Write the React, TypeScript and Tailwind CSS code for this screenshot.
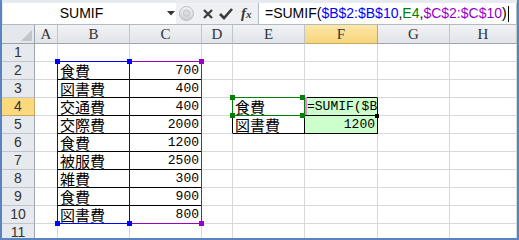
const COLS = ['A', 'B', 'C', 'D', 'E', 'F', 'G', 'H'];
const ROWS = [1, 2, 3, 4, 5, 6, 7, 8, 9, 10, 11];

type Kind = 'ja' | 'num' | 'formula';

const cells: Record<string, { text: string; kind: Kind }> = {
  B2: { text: '食費', kind: 'ja' },
  B3: { text: '図書費', kind: 'ja' },
  B4: { text: '交通費', kind: 'ja' },
  B5: { text: '交際費', kind: 'ja' },
  B6: { text: '食費', kind: 'ja' },
  B7: { text: '被服費', kind: 'ja' },
  B8: { text: '雑費', kind: 'ja' },
  B9: { text: '食費', kind: 'ja' },
  B10: { text: '図書費', kind: 'ja' },
  C2: { text: '700', kind: 'num' },
  C3: { text: '400', kind: 'num' },
  C4: { text: '400', kind: 'num' },
  C5: { text: '2000', kind: 'num' },
  C6: { text: '1200', kind: 'num' },
  C7: { text: '2500', kind: 'num' },
  C8: { text: '300', kind: 'num' },
  C9: { text: '900', kind: 'num' },
  C10: { text: '800', kind: 'num' },
  E4: { text: '食費', kind: 'ja' },
  E5: { text: '図書費', kind: 'ja' },
  F4: { text: '=SUMIF($B$2:$B$10,E4,$C$2:$C$10)', kind: 'formula' },
  F5: { text: '1200', kind: 'num' },
};

// cells that carry thin black borders
function inTable(c: number, r: number) {
  if ((c === 1 || c === 2) && r >= 2 && r <= 10) return true;
  if ((c === 4 || c === 5) && r >= 4 && r <= 5) return true;
  return false;
}

function Cell({ c, r }: { c: number; r: number }) {
  const key = COLS[c] + r;
  const data = cells[key];
  const rightBlack = inTable(c, r) || inTable(c + 1, r);
  const bottomBlack = inTable(c, r) || inTable(c, r + 1);
  const green = c === 5 && (r === 4 || r === 5);
  return (
    <div
      className={`h-[18px] whitespace-nowrap border-r border-b ${
        rightBlack ? 'border-r-black' : 'border-r-[#d5d8dc]'
      } ${bottomBlack ? 'border-b-black' : 'border-b-[#d5d8dc]'} ${green ? 'bg-[#ccffcc]' : 'bg-white'} ${
        data?.kind === 'formula' ? 'overflow-hidden' : ''
      }`}
    >
      {data?.kind === 'ja' && (
        <div className="pl-[2px] text-[15px] leading-[17px] text-black font-['Noto_Sans_CJK_JP',sans-serif]">
          {data.text}
        </div>
      )}
      {data?.kind === 'num' && (
        <div className="pr-[2px] text-right text-[13px] leading-[17px] text-black font-['Liberation_Mono',monospace]">
          {data.text}
        </div>
      )}
      {data?.kind === 'formula' && (
        <div className="pl-[2px] text-[13px] leading-[17px] text-black font-['Liberation_Mono',monospace]">
          {data.text}
        </div>
      )}
    </div>
  );
}

function Handle({ x, y, color }: { x: number; y: number; color: string }) {
  return <div className={`absolute w-[5px] h-[5px] ${color}`} style={{ left: x - 2, top: y - 2 }} />;
}

function FormulaBar() {
  return (
    <div className="h-[25px] pt-[3px] flex bg-[#e7eaef] border-b border-[#b4bac3]">
      <div className="ml-[1px] w-[173px] h-[21px] bg-white flex items-center">
        <div className="w-[157px] text-center text-[14px] text-black font-['Liberation_Sans',Arial,sans-serif]">SUMIF</div>
        <svg width="8" height="5" viewBox="0 0 8 5" className="ml-[7px]">
          <path d="M0 0 L8 0 L4 4.5 Z" fill="#333" />
        </svg>
      </div>
      <div className="w-[82px] h-[21px] flex items-center bg-[#eef0f4]">
        <svg width="15" height="15" viewBox="0 0 15 15" className="ml-[3px]">
          <defs>
            <linearGradient id="g1" x1="0" y1="0" x2="0" y2="1">
              <stop offset="0" stopColor="#f4f5f7" />
              <stop offset="1" stopColor="#c9cdd3" />
            </linearGradient>
          </defs>
          <circle cx="7.5" cy="7.5" r="7" fill="url(#g1)" stroke="#b9bdc4" />
          <circle cx="7.5" cy="7" r="3.2" fill="#d6d9de" stroke="#c3c7cd" />
        </svg>
        <svg width="10" height="10" viewBox="0 0 10 10" className="ml-[9px]">
          <path d="M1 1 L9 9 M9 1 L1 9" stroke="#3a3a3a" strokeWidth="2.2" />
        </svg>
        <svg width="14" height="12" viewBox="0 0 14 12" className="ml-[6px]">
          <path d="M1 6 L5 10 L13 1" stroke="#3a3a3a" strokeWidth="2.6" fill="none" />
        </svg>
        <div className="ml-[8px] italic font-bold text-[15px] leading-none text-[#3a3a3a] font-['Liberation_Serif',serif]">
          f<span className="text-[11px]">x</span>
        </div>
      </div>
      <div className="flex-1 h-[21px] bg-white border-l border-r border-[#b4bac3] flex items-center pl-[6px] text-[14px] whitespace-nowrap font-['Liberation_Sans',Arial,sans-serif]">
        <span className="text-black">=SUMIF(</span>
        <span className="text-[#0000ff]">$B$2:$B$10</span>
        <span className="text-black">,</span>
        <span className="text-[#008000]">E4</span>
        <span className="text-black">,</span>
        <span className="text-[#9900cc]">$C$2:$C$10</span>
        <span className="text-black">)</span>
        <span className="w-[1px] h-[16px] bg-black ml-[1px]" />
      </div>
    </div>
  );
}

export default function App() {
  return (
    <div className="w-[519px] h-[240px] overflow-hidden bg-white border-x-2 border-b-2 border-[#5a84bf] flex flex-col">
      <FormulaBar />
      <div className="h-[2px] bg-[#f4f5f7]" />
      <div className="relative grid grid-cols-[33px_23px_72px_72px_31px_72px_73px_72px_67px]">
        {/* corner */}
        <div className="h-[19px] bg-[#e4e7eb] border-r border-b border-[#9da4ae] flex items-end justify-end p-[2px]">
          <svg width="11" height="11" viewBox="0 0 11 11">
            <path d="M11 0 L11 11 L0 11 Z" fill="#c2c6cc" />
          </svg>
        </div>
        {COLS.map((col) => (
          <div
            key={col}
            className={`h-[19px] border-r border-b flex items-center justify-center text-[15px] font-['Liberation_Serif',serif] ${
              col === 'F'
                ? 'bg-gradient-to-b from-[#fde8a8] to-[#f6d47a] border-r-[#c2a867] border-b-[#c2a867] text-[#333]'
                : 'bg-gradient-to-b from-[#f1f3f5] to-[#e1e4e8] border-r-[#c0c5cc] border-b-[#9da4ae] text-[#333]'
            }`}
          >
            {col}
          </div>
        ))}
        {ROWS.map((r) => (
          <div key={r} className="contents">
            <div
              className={`h-[18px] border-r border-b flex items-center justify-center text-[14px] font-['Liberation_Sans',Arial,sans-serif] ${
                r === 4
                  ? 'bg-[#fcd97c] border-r-[#c2a867] border-b-[#c2a867] text-[#333]'
                  : 'bg-[#e6e9ed] border-r-[#9da4ae] border-b-[#c0c5cc] text-[#333]'
              }`}
            >
              {r}
            </div>
            {COLS.map((_, c) => (
              <Cell key={c} c={c} r={r} />
            ))}
          </div>
        ))}

        {/* range highlights for the formula being edited */}
        <div className="absolute left-[127px] top-[36px] w-[73px] h-[163px] border border-[#9900cc]" />
        <div className="absolute left-[55px] top-[36px] w-[73px] h-[163px] border border-[#0000ff]" />
        <Handle x={199} y={36} color="bg-[#9900cc]" />
        <Handle x={199} y={198} color="bg-[#9900cc]" />
        <Handle x={55} y={36} color="bg-[#0000ff]" />
        <Handle x={127} y={36} color="bg-[#0000ff]" />
        <Handle x={55} y={198} color="bg-[#0000ff]" />
        <Handle x={127} y={198} color="bg-[#0000ff]" />

        <div className="absolute left-[230px] top-[72px] w-[73px] h-[19px] border border-[#008000]" />
        <Handle x={230} y={72} color="bg-[#008000]" />
        <Handle x={230} y={90} color="bg-[#008000]" />
        <Handle x={300} y={72} color="bg-[#008000]" />
        <Handle x={300} y={90} color="bg-[#008000]" />
        <div className="absolute left-[303px] top-[72px] w-[2px] h-[18px] bg-[#f080e0]" />
        <div className="absolute left-[373px] top-[89px] w-[4px] h-[4px] bg-black" />
      </div>
    </div>
  );
}
